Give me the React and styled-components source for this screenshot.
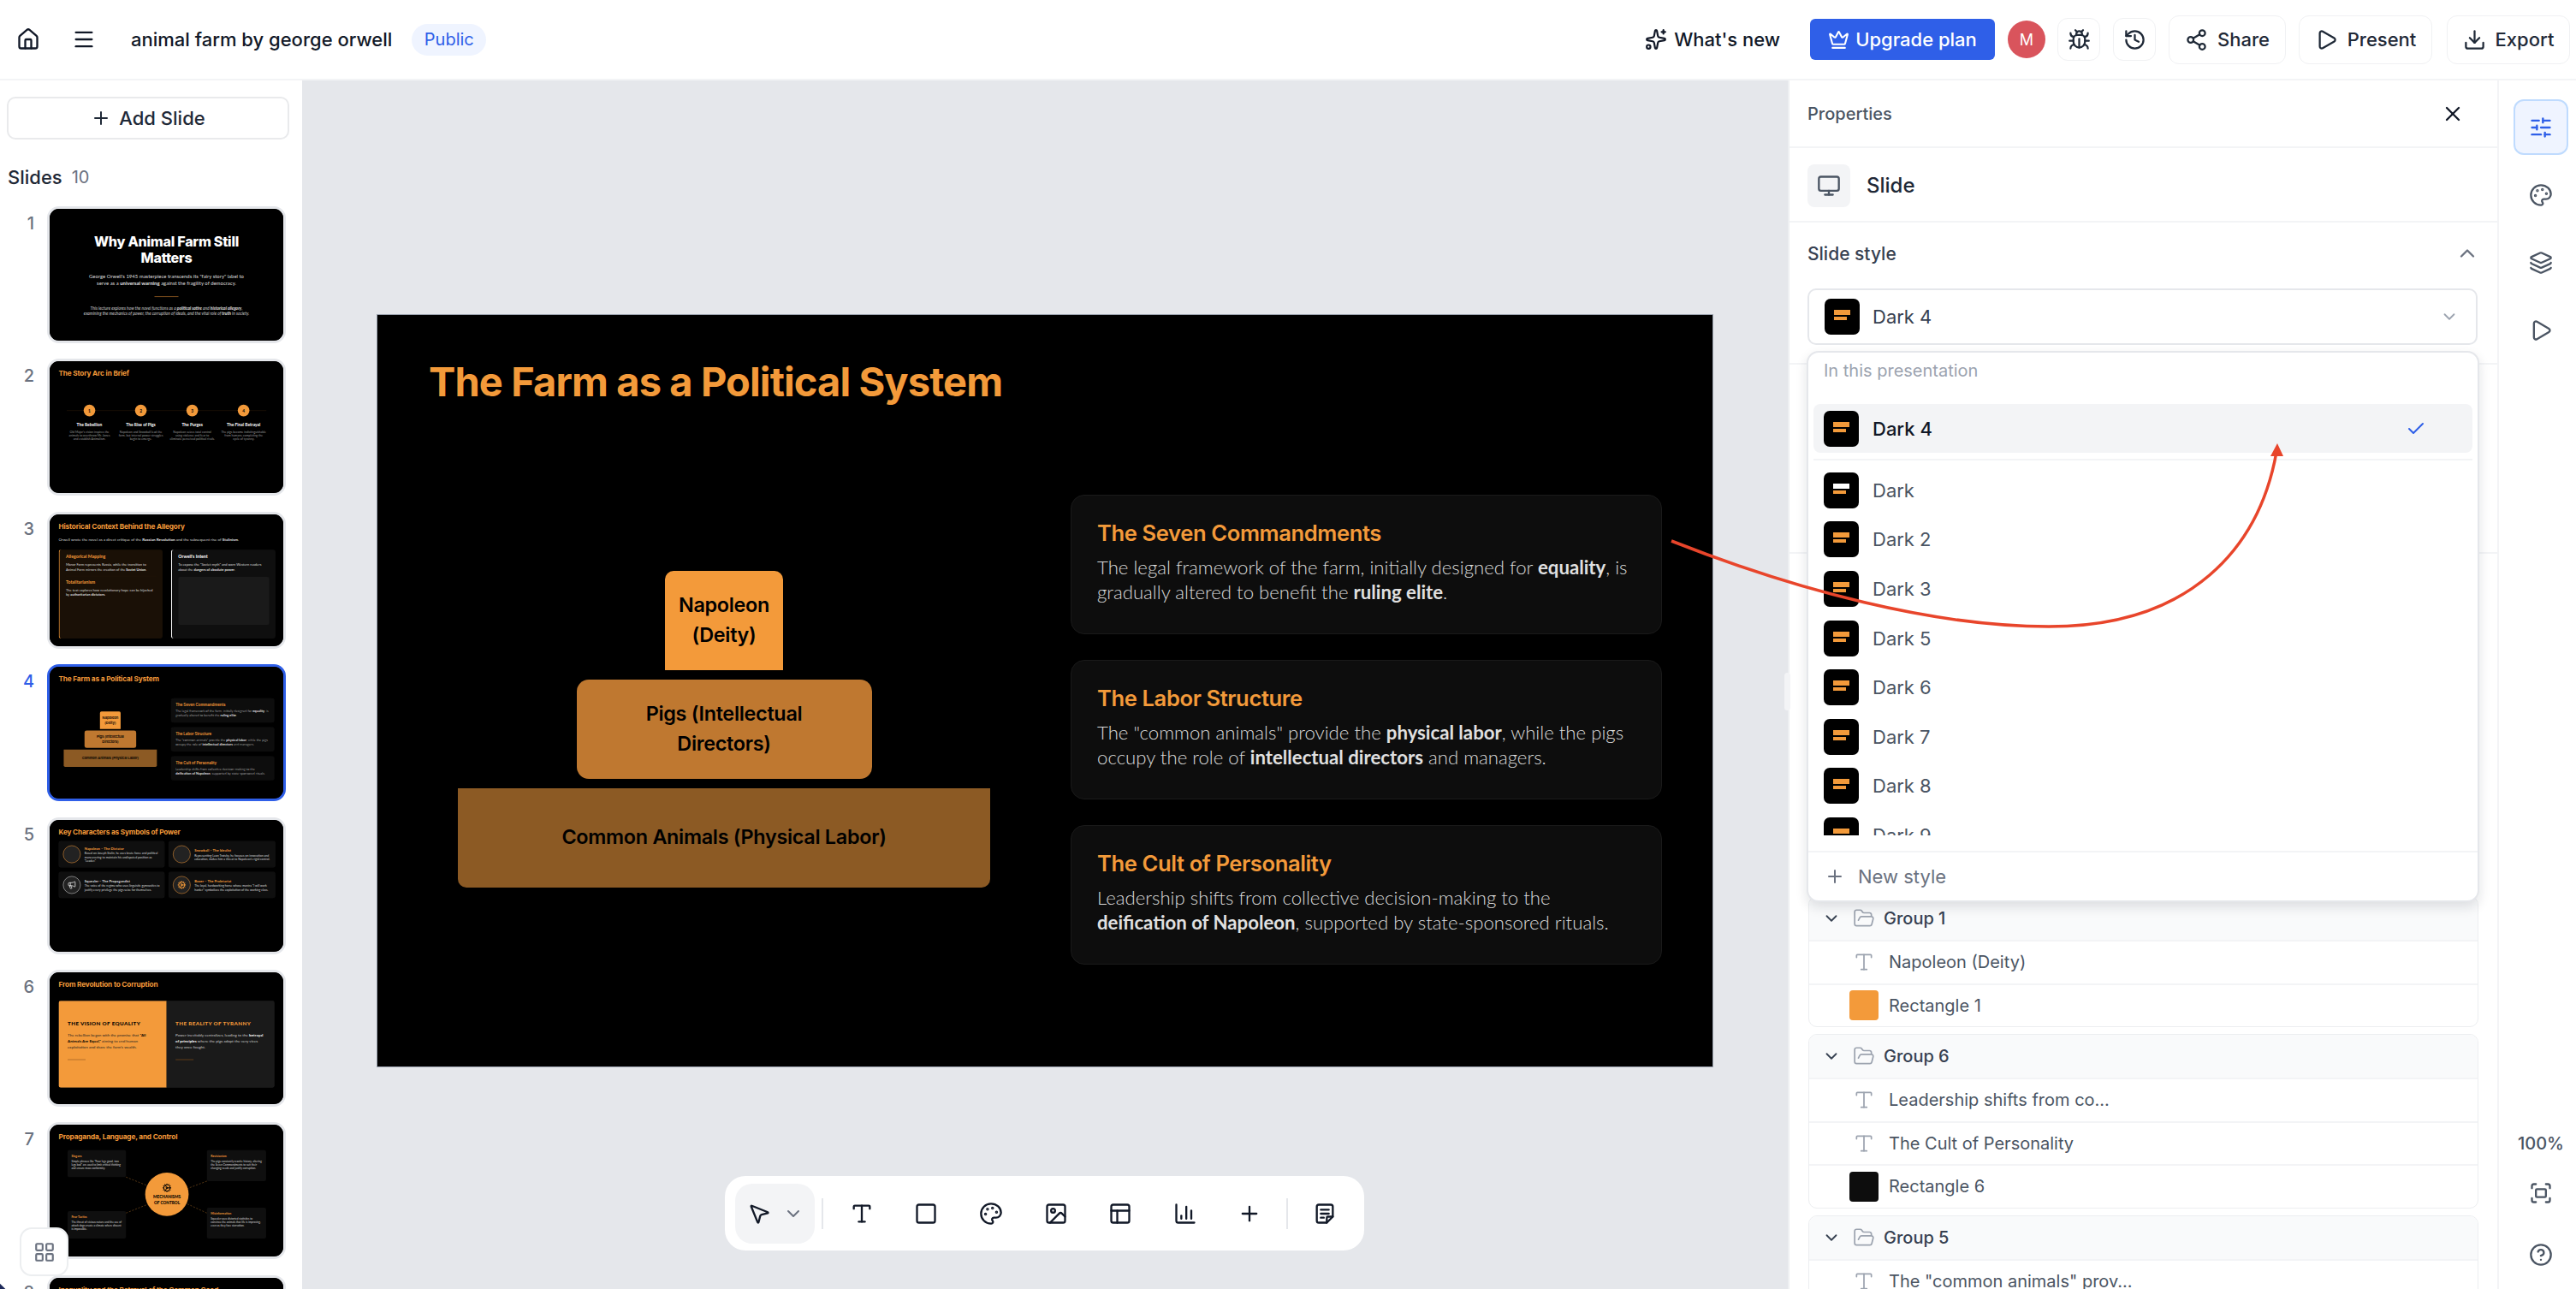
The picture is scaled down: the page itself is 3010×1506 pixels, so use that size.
import styled, { createGlobalStyle } from "styled-components"
import {
    House, Menu, Sparkles, Crown, Bug, History, Share2, Play, Download, X, Monitor, ChevronUp, ChevronDown,
    Check, Plus, SlidersHorizontal, Palette, Layers, Fullscreen, CircleHelp, MousePointer2, Type, Square,
    Image, PanelsTopLeft, ChartColumn, FolderOpen, LayoutGrid, Megaphone, Cog,
} from "lucide-react"

const ORANGE = "#f39a3a"
const BLUE = "#2f5fe8"
const SANS = `"Inter", "Liberation Sans", sans-serif`
const SLIDE_FONT = `"Lato", "Inter", sans-serif`

const GlobalStyle = createGlobalStyle`
    * { box-sizing: border-box; }
    html, body { margin: 0; padding: 0; background: #fff; }
    body { font-family: ${SANS}; width: 3010px; height: 1506px; overflow: hidden; }
`

const Page = styled.div`
    position: relative;
    width: 3010px;
    height: 1506px;
    display: flex;
    flex-direction: column;
    overflow: hidden;
`

const Header = styled.header`
    height: 94px;
    flex: none;
    display: flex;
    align-items: center;
    justify-content: space-between;
    padding: 0 7px 0 19px;
    border-bottom: 2px solid #f3f4f6;
    color: #111827;
`
const HeaderGroup = styled.div`
    display: flex;
    align-items: center;
`
const Title = styled.span`
    margin-left: 41px;
    font-size: 22px;
    font-weight: 500;
    color: #111827;
`
const Pill = styled.span`
    margin-left: 23px;
    width: 87px;
    height: 37px;
    border-radius: 19px;
    background: #eff4ff;
    color: ${BLUE};
    font-size: 20px;
    display: flex;
    align-items: center;
    justify-content: center;
`
const MenuButton = styled.span`
    margin-left: 37px;
    display: flex;
`
const WhatsNew = styled.span`
    display: flex;
    align-items: center;
    gap: 8px;
    font-size: 22px;
    font-weight: 500;
    margin-right: 35px;
`
const Upgrade = styled.span`
    width: 216px;
    height: 48px;
    background: ${BLUE};
    color: #fff;
    border-radius: 6px;
    display: flex;
    align-items: center;
    justify-content: center;
    gap: 7px;
    font-size: 22px;
    font-weight: 500;
`
const Avatar = styled.span`
    width: 44px;
    height: 44px;
    margin: 0 14px 0 15px;
    border-radius: 50%;
    background: #d9545c;
    color: #fff;
    font-size: 18px;
    display: flex;
    align-items: center;
    justify-content: center;
`
const HeadButton = styled.span`
    width: ${p => p.$w}px;
    height: ${p => p.$h}px;
    margin-right: ${p => p.$mr || 0}px;
    border: 1px solid #f0f1f3;
    border-radius: 12px;
    display: flex;
    align-items: center;
    justify-content: center;
    gap: 11px;
    font-size: 22px;
    font-weight: 500;
    color: #1f2937;
`

const Body = styled.div`
    flex: 1;
    min-height: 0;
    display: flex;
`

/* left column */
const Sidebar = styled.aside`
    width: 353px;
    flex: none;
    padding: 19px 8px 0;
    overflow: hidden;
    background: #fff;
`
const AddSlide = styled.div`
    width: 330px;
    height: 50px;
    border: 2px solid #e9eaec;
    border-radius: 10px;
    display: flex;
    align-items: center;
    justify-content: center;
    gap: 9px;
    font-size: 22px;
    font-weight: 500;
    color: #1f2937;
`
const SlidesLabel = styled.div`
    margin: 31px 0 21px 1px;
    height: 26px;
    display: flex;
    align-items: center;
    gap: 11px;
    font-size: 22px;
    font-weight: 500;
    color: #1f2937;
    span {
        font-size: 20px;
        font-weight: 400;
        color: #6b7280;
    }
`
const ThumbList = styled.div`
    display: flex;
    flex-direction: column;
    gap: 18.4px;
`
const ThumbRow = styled.div`
    display: flex;
`
const ThumbNumber = styled.div`
    width: 32px;
    margin-right: 15px;
    padding-top: 8px;
    text-align: right;
    font-size: 20px;
    line-height: 24px;
    font-weight: 500;
    color: ${p => (p.$active ? BLUE : "#6b7280")};
`
const ThumbFrame = styled.div`
    width: 279px;
    height: 160px;
    flex: none;
    border: 3px solid ${p => (p.$active ? BLUE : "#e5e7eb")};
    border-radius: 14px;
    overflow: hidden;
    background: #000;
    & > div {
        transform: scale(0.175);
        transform-origin: 0 0;
    }
`

/* slide content */
const SlideBase = styled.div`
    position: relative;
    width: 1560px;
    height: 878px;
    flex: none;
    background: #000;
    padding: 49px 59px 0 60px;
    font-family: ${SLIDE_FONT};
    color: #dadada;
    overflow: hidden;
    strong { font-weight: 700; color: #e0e0e0; }
`
const SlideTitle = styled.h1`
    margin: 0;
    font-family: ${SANS};
    font-size: 47px;
    line-height: 58px;
    font-weight: 700;
    color: ${ORANGE};
    letter-spacing: -0.9px;
`
const Columns = styled.div`
    margin-top: 103px;
    height: 548px;
    display: grid;
    grid-template-columns: 690px 691px;
    gap: 60px;
`
const Pyramid = styled.div`
    display: flex;
    flex-direction: column;
    align-items: center;
    justify-content: center;
    gap: 11px;
    margin-top: -2px;
`
const Tier = styled.div`
    width: ${p => p.$w}px;
    height: 116px;
    padding: 0 ${p => p.$pad}px 2px;
    background: ${p => p.$bg};
    border-radius: ${p => p.$radius};
    color: #000;
    font-family: ${SANS};
    font-size: 23.4px;
    line-height: 35px;
    font-weight: 600;
    letter-spacing: -0.3px;
    text-align: center;
    display: flex;
    align-items: center;
    justify-content: center;
`
const InfoCards = styled.div`
    display: flex;
    flex-direction: column;
    gap: 30px;
`
const InfoCard = styled.div`
    height: 163px;
    background: #0d0d0d;
    border: 1px solid #1a1a1a;
    border-radius: 16px;
    padding: 27px 30px 0;
    h3 {
        margin: 0 0 8px;
        font-family: ${SANS};
        font-size: 25.6px;
        line-height: 34px;
        font-weight: 600;
        letter-spacing: -0.4px;
        color: ${ORANGE};
    }
    p {
        margin: 0;
        font-size: 22.2px;
        line-height: 29px;
        font-weight: 300;
    }
`

/* slide 1 */
const CenterSlide = styled(SlideBase)`
    padding: 165px 220px 0;
    text-align: center;
    h1 {
        margin: 0 0 40px;
        font-family: ${SANS};
        font-size: 92px;
        line-height: 108px;
        font-weight: 800;
        color: #fff;
        letter-spacing: -1.5px;
    }
    p.lead {
        margin: 0 auto;
        width: 1120px;
        font-size: 34px;
        line-height: 51px;
        color: #ddd;
    }
    p.foot {
        margin: 0;
        font-size: 28px;
        line-height: 34px;
        font-style: italic;
        color: #ccc;
    }
`
const Rule = styled.div`
    width: ${p => p.$w || 160}px;
    height: 6px;
    margin: ${p => p.$m || "60px auto 57px"};
    background: ${p => p.$c || "#7a4c1c"};
`

/* slide 2 */
const Timeline = styled.div`
    position: relative;
    margin: 183px 54px 0;
    display: grid;
    grid-template-columns: repeat(4, 1fr);
    gap: 40px;
    &:before {
        content: "";
        position: absolute;
        top: 39px;
        left: 0;
        right: 0;
        height: 3px;
        background: #2a1a08;
    }
`
const TimeStep = styled.div`
    position: relative;
    text-align: center;
    b {
        display: flex;
        width: 78px;
        height: 78px;
        margin: 0 auto 38px;
        align-items: center;
        justify-content: center;
        border-radius: 50%;
        background: ${ORANGE};
        color: #000;
        font-size: 28px;
    }
    h4 {
        margin: 0 0 22px;
        font-size: 28px;
        color: #fff;
    }
    p {
        margin: 0;
        font-size: 20px;
        line-height: 23px;
        color: #999;
    }
`

/* slide 3 */
const ContextIntro = styled.p`
    margin: 43px 0 55px;
    font-size: 26px;
    line-height: 30px;
    color: #ccc;
`
const ContextGrid = styled.div`
    display: grid;
    grid-template-columns: 694px 697px;
    gap: 57px;
`
const ContextCard = styled.div`
    height: 593px;
    padding: 26px 42px;
    background: ${p => p.$bg};
    border-left: 6px solid ${p => p.$c};
    border-radius: 16px;
    h4 {
        margin: 0 0 22px;
        font-size: 30px;
        color: ${p => p.$c};
    }
    p {
        margin: 0;
        font-size: 23px;
        line-height: 32px;
    }
    hr {
        margin: 28px 0 18px;
        border: 0;
        height: 1px;
        background: #33240f;
    }
`
const MissingImage = styled.div`
    margin-top: 34px;
    height: 320px;
    border-radius: 12px;
    background: #1a1a1a;
`

/* slide 5 */
const CharGrid = styled.div`
    margin-top: 33px;
    display: grid;
    grid-template-columns: 708px 714px;
    gap: 28px 26px;
`
const CharCard = styled.div`
    height: 177px;
    padding: 0 28px;
    display: flex;
    align-items: center;
    gap: 26px;
    background: #0f0f0f;
    border: 1px solid #1c1c1c;
    border-radius: 16px;
    i {
        width: 118px;
        height: 118px;
        flex: none;
        display: flex;
        align-items: center;
        justify-content: center;
        border-radius: 50%;
        border: 3px solid ${p => p.$c};
        background: #222;
        color: ${p => p.$c};
    }
    h4 {
        margin: 0 0 8px;
        font-size: 24px;
        color: ${p => p.$c};
    }
    p {
        margin: 0;
        font-size: 20px;
        line-height: 24px;
    }
`

/* slide 6 */
const Split = styled.div`
    margin-top: 83px;
    height: 580px;
    display: grid;
    grid-template-columns: 1fr 1fr;
    border-radius: 14px;
    overflow: hidden;
    background: #1a1a1a;
`
const SplitSide = styled.div`
    padding: 130px 60px 0;
    background: ${p => (p.$fill ? ORANGE : "#1a1a1a")};
    color: ${p => (p.$fill ? "#222" : "#ccc")};
    h3 {
        margin: 0 0 36px;
        font-size: 36px;
        letter-spacing: 2px;
        font-weight: 900;
        color: ${p => (p.$fill ? "#000" : ORANGE)};
    }
    p {
        margin: 0 0 60px;
        font-size: 26px;
        line-height: 40px;
    }
    strong { color: ${p => (p.$fill ? "#000" : "#fff")}; }
`

/* slide 7 */
const ControlNode = styled.div`
    position: absolute;
    left: ${p => p.$x}px;
    top: ${p => p.$y}px;
    width: ${p => p.$w}px;
    height: ${p => p.$h}px;
    padding: 26px;
    background: #0f0f0f;
    border-radius: 12px;
    h4 {
        margin: 0 0 10px;
        font-size: 20px;
        color: ${ORANGE};
    }
    p {
        margin: 0;
        font-size: 18px;
        line-height: 24px;
    }
`
const ControlHub = styled.div`
    position: absolute;
    left: 638px;
    top: 320px;
    width: 290px;
    height: 290px;
    border-radius: 50%;
    background: ${ORANGE};
    color: #000;
    display: flex;
    flex-direction: column;
    align-items: center;
    justify-content: center;
    gap: 10px;
    font-size: 27px;
    line-height: 38px;
    font-weight: 900;
    text-align: center;
`
const HubLines = styled.svg`
    position: absolute;
    left: 0;
    top: 0;
`

/* centre canvas */
const Canvas = styled.main`
    position: relative;
    flex: 1;
    min-width: 0;
    background: #e5e7eb;
    display: flex;
    align-items: center;
    justify-content: center;
    padding-top: 14px;
`
const MainSlide = styled(SlideBase)`
    box-shadow: 0 0 0 1px #9ca3af;
`
const Toolbar = styled.div`
    position: absolute;
    left: 494px;
    bottom: 45px;
    width: 747px;
    height: 87px;
    padding: 0 12px;
    display: flex;
    align-items: center;
    background: #fff;
    border-radius: 24px;
`
const PointerGroup = styled.div`
    width: 93px;
    height: 70px;
    flex: none;
    padding-left: 14px;
    display: flex;
    align-items: center;
    gap: 14px;
    background: #f3f4f6;
    border-radius: 20px;
    color: #111827;
    svg + svg { color: #6b7280; }
`
const ToolDivider = styled.div`
    width: 2px;
    height: 36px;
    flex: none;
    margin: ${p => p.$m};
    background: #e5e7eb;
`
const Tool = styled.span`
    width: 75.6px;
    flex: none;
    display: flex;
    justify-content: center;
    color: #111827;
`

/* right panel */
const Panel = styled.section`
    position: relative;
    height: 100%;
    border-left: 2px solid #eef0f2;
    background: #fff;
    overflow: hidden;
`
const PanelSide = styled.div`
    position: relative;
    width: 829px;
    flex: none;
`
const ResizeHandle = styled.div`
    position: absolute;
    left: -4px;
    top: 692px;
    width: 7px;
    height: 44px;
    border-radius: 4px;
    background: #f3f4f6;
    z-index: 2;
`
const PanelHead = styled.div`
    height: 79px;
    padding: 0 38px 0 21px;
    display: flex;
    align-items: center;
    justify-content: space-between;
    border-bottom: 2px solid #f3f4f6;
    font-size: 20px;
    font-weight: 500;
    color: #4b5563;
    svg { color: #111827; }
`
const SlideHead = styled.div`
    height: 87px;
    padding: 2px 21px 0;
    display: flex;
    align-items: center;
    gap: 19px;
    border-bottom: 2px solid #f3f4f6;
    font-size: 24px;
    font-weight: 500;
    color: #1f2937;
`
const IconBox = styled.span`
    width: 50px;
    height: 50px;
    border-radius: 8px;
    background: #f3f4f6;
    color: #4b5563;
    display: flex;
    align-items: center;
    justify-content: center;
`
const StyleSection = styled.div`
    position: relative;
    height: 166px;
    padding: 0 21px;
    border-bottom: 2px solid #f3f4f6;
`
const SectionHead = styled.div`
    height: 72px;
    margin-bottom: 5px;
    padding-right: 0;
    display: flex;
    align-items: center;
    justify-content: space-between;
    font-size: 21px;
    font-weight: 500;
    color: #374151;
    svg { color: #6b7280; }
`
const Select = styled.div`
    width: 783px;
    height: 66px;
    padding: 0 20px 0 18px;
    display: flex;
    align-items: center;
    gap: 15px;
    border: 2px solid #e5e7eb;
    border-radius: 10px;
    font-size: 22px;
    color: #374151;
    span { flex: 1; }
    svg { color: #9ca3af; }
`
const Swatch = styled.div`
    width: 41px;
    height: 42px;
    flex: none;
    padding: 13px 0 0 11px;
    background: #000;
    border-radius: 7px;
    &:before, &:after {
        content: "";
        display: block;
        background: ${ORANGE};
    }
    &:before {
        width: 19px;
        height: 6px;
        margin-bottom: 2px;
        background: ${p => (p.$white ? "#fff" : ORANGE)};
    }
    &:after {
        width: 15px;
        height: 4px;
    }
`
const HiddenSection = styled.div`
    height: 221px;
    border-bottom: 2px solid #f3f4f6;
    margin-bottom: 400px;
`
const Group = styled.div`
    margin: 0 22px 8px 22px;
    border: 1px solid #eceef0;
    border-radius: 10px;
    overflow: hidden;
`
const GroupHead = styled.div`
    height: 50px;
    padding-left: 15px;
    display: flex;
    align-items: center;
    background: #f9fafb;
    font-size: 20px;
    font-weight: 500;
    color: #374151;
    svg:first-child { color: #374151; margin-right: 14px; }
    svg + svg { color: #9ca3af; margin-right: 10px; }
`
const LayerRow = styled.div`
    height: 50.5px;
    padding-left: 47px;
    display: flex;
    align-items: center;
    gap: 12px;
    border-top: 2px solid #f3f4f6;
    font-size: 20px;
    color: #4b5563;
    svg {
        width: 34px;
        flex: none;
        color: #9ca3af;
    }
`
const LayerSwatch = styled.span`
    width: 34px;
    height: 35px;
    flex: none;
    border-radius: 4px;
    background: ${p => p.$c};
`
const Dropdown = styled.div`
    position: absolute;
    left: 20px;
    top: 316px;
    width: 786px;
    height: 644px;
    z-index: 3;
    display: flex;
    flex-direction: column;
    background: #fff;
    border: 2px solid #e5e7eb;
    border-radius: 14px;
    box-shadow: 0 6px 14px rgba(17, 24, 39, 0.12);
`
const DropLabel = styled.div`
    height: 60px;
    padding: 9px 0 0 18px;
    font-size: 20px;
    color: #9ca3af;
`
const OptionList = styled.div`
    height: 504px;
    padding: 0 6px;
    overflow: hidden;
`
const Option = styled.div`
    height: ${p => (p.$selected ? 57 : 57.6)}px;
    padding: 0 12px;
    display: flex;
    align-items: center;
    gap: 16px;
    border-radius: 8px;
    background: ${p => (p.$selected ? "#f3f4f6" : "transparent")};
    font-size: 22px;
    font-weight: ${p => (p.$selected ? 500 : 400)};
    color: ${p => (p.$selected ? "#111827" : "#4b5563")};
    span { flex: 1; }
    svg {
        margin-right: 42px;
        color: ${BLUE};
    }
`
const OptionDivider = styled.div`
    height: 2px;
    margin: 7px 0 6px;
    background: #f3f4f6;
`
const NewStyle = styled.div`
    flex: 1;
    margin-top: 18px;
    padding-left: 19px;
    display: flex;
    align-items: center;
    gap: 15px;
    border-top: 2px solid #f3f4f6;
    font-size: 22px;
    color: #6b7280;
`

/* rail */
const Rail = styled.nav`
    width: 92px;
    flex: none;
    padding-top: 22px;
    display: flex;
    flex-direction: column;
    align-items: center;
    border-left: 2px solid #f3f4f6;
    color: #4b5563;
    background: #fff;
`
const RailButton = styled.span`
    width: 64px;
    height: 65px;
    margin-left: 8px;
    margin-bottom: ${p => p.$mb || 14}px;
    display: flex;
    align-items: center;
    justify-content: center;
    border-radius: 12px;
    border: 2px solid ${p => (p.$active ? "#bfdbfe" : "transparent")};
    background: ${p => (p.$active ? "#eff4ff" : "transparent")};
    color: ${p => (p.$active ? BLUE : "inherit")};
`
const Zoom = styled.div`
    margin-top: auto;
    margin-bottom: 32px;
    margin-left: 8px;
    font-size: 20px;
    font-weight: 500;
`
const RailIcon = styled.span`
    margin-left: 8px;
    margin-bottom: ${p => p.$mb}px;
    display: flex;
`

const GridButton = styled.div`
    position: absolute;
    left: 23px;
    top: 1434px;
    width: 57px;
    height: 57px;
    display: flex;
    align-items: center;
    justify-content: center;
    background: #fff;
    border: 2px solid #eceef0;
    border-radius: 14px;
    color: #6b7280;
`
const CornerBadge = styled.div`
    position: absolute;
    left: -12px;
    top: 1499px;
    width: 16px;
    height: 16px;
    transform: rotate(45deg);
    background: #1e2a5a;
`
const Annotation = styled.svg`
    position: absolute;
    left: 0;
    top: 0;
    z-index: 5;
    pointer-events: none;
`

function NotesIcon() {
    return (
        <svg width="28" height="28" viewBox="0 0 24 24" fill="none" stroke="currentColor" strokeWidth="2" strokeLinecap="round" strokeLinejoin="round">
            <path d="M6 3h12a2 2 0 0 1 2 2v10l-6 6H6a2 2 0 0 1-2-2V5a2 2 0 0 1 2-2z" />
            <path d="M14 21v-5a1 1 0 0 1 1-1h5" />
            <path d="M8 8h8M8 12h8M8 16h3" />
        </svg>
    )
}

function FarmSlide() {
    return (
        <>
            <SlideTitle>The Farm as a Political System</SlideTitle>
            <Columns>
                <Pyramid>
                    <Tier $w={138} $pad={10} $bg={ORANGE} $radius="10px 10px 0 0">Napoleon (Deity)</Tier>
                    <Tier $w={345} $pad={60} $bg="#bf7830" $radius="14px">Pigs (Intellectual Directors)</Tier>
                    <Tier $w={622} $pad={60} $bg="#8c5a24" $radius="0 0 10px 10px">Common Animals (Physical Labor)</Tier>
                </Pyramid>
                <InfoCards>
                    <InfoCard>
                        <h3>The Seven Commandments</h3>
                        <p>The legal framework of the farm, initially designed for <strong>equality</strong>, is gradually altered to benefit the <strong>ruling elite</strong>.</p>
                    </InfoCard>
                    <InfoCard>
                        <h3>The Labor Structure</h3>
                        <p>The "common animals" provide the <strong>physical labor</strong>, while the pigs occupy the role of <strong>intellectual directors</strong> and managers.</p>
                    </InfoCard>
                    <InfoCard>
                        <h3>The Cult of Personality</h3>
                        <p>Leadership shifts from collective decision-making to the <strong>deification of Napoleon</strong>, supported by state-sponsored rituals.</p>
                    </InfoCard>
                </InfoCards>
            </Columns>
        </>
    )
}

const steps = [
    ["The Rebellion", "Old Major's vision inspires the animals to overthrow Mr. Jones and establish Animalism."],
    ["The Rise of Pigs", "Napoleon and Snowball lead the farm, but internal power struggles begin to emerge."],
    ["The Purges", "Napoleon seizes total control using violence and fear to eliminate perceived political rivals."],
    ["The Final Betrayal", "The pigs become indistinguishable from humans, completing the cycle of tyranny."],
]

const characters = [
    ["Napoleon – The Dictator", ORANGE, "Based on Joseph Stalin, he uses brute force and political maneuvering to maintain his undisputed position as \"Leader.\""],
    ["Snowball – The Idealist", ORANGE, "Representing Leon Trotsky, he focuses on innovation and education, makes him a threat to Napoleon's rigid control."],
    ["Squealer – The Propagandist", "#dddddd", "The voice of the regime who uses linguistic gymnastics to justify every privilege the pigs seize for themselves.", <Megaphone size={60} key="m" />],
    ["Boxer – The Proletariat", ORANGE, "The loyal, hardworking horse whose mantra \"I will work harder\" symbolizes the exploitation of the working class.", <Cog size={60} key="c" />],
]

const nodes = [
    { x: 120, y: 170, w: 390, h: 180, t: "Slogans", d: "Simple phrases like \"Four legs good, two legs bad\" are used to limit critical thinking and ensure mass conformity." },
    { x: 1050, y: 170, w: 395, h: 207, t: "Revisionism", d: "The pigs constantly rewrite history, altering the Seven Commandments to suit their changing needs and justify corruption." },
    { x: 120, y: 577, w: 390, h: 183, t: "Fear Tactics", d: "The threat of vicious nature and the use of attack dogs create a climate where dissent is impossible." },
    { x: 1050, y: 554, w: 395, h: 206, t: "Misinformation", d: "Squealer uses distorted statistics to convince the animals that life is improving, even as they face starvation." },
]

const slides = [
    <CenterSlide key="1">
        <h1>Why Animal Farm Still Matters</h1>
        <p className="lead">George Orwell's 1945 masterpiece transcends its "fairy story" label to serve as a <strong>universal warning</strong> against the fragility of democracy.</p>
        <Rule />
        <p className="foot">This lecture explores how the novel functions as a <strong>political satire</strong> and <strong>historical allegory</strong>, examining the mechanics of power, the corruption of ideals, and the vital role of <strong>truth</strong> in society.</p>
    </CenterSlide>,
    <SlideBase key="2">
        <SlideTitle>The Story Arc in Brief</SlideTitle>
        <Timeline>
            {steps.map((s, i) => (
                <TimeStep key={s[0]}>
                    <b>{i + 1}</b>
                    <h4>{s[0]}</h4>
                    <p>{s[1]}</p>
                </TimeStep>
            ))}
        </Timeline>
    </SlideBase>,
    <SlideBase key="3">
        <SlideTitle>Historical Context Behind the Allegory</SlideTitle>
        <ContextIntro>Orwell wrote the novel as a direct critique of the <strong>Russian Revolution</strong> and the subsequent rise of <strong>Stalinism</strong>.</ContextIntro>
        <ContextGrid>
            <ContextCard $bg="#1a1006" $c={ORANGE}>
                <h4>Allegorical Mapping</h4>
                <p>Manor Farm represents Russia, while the transition to Animal Farm mirrors the creation of the <strong>Soviet Union</strong>.</p>
                <hr />
                <h4>Totalitarianism</h4>
                <p>The text explores how revolutionary hope can be hijacked by <strong>authoritarian dictators</strong>.</p>
            </ContextCard>
            <ContextCard $bg="#0f0f0f" $c="#ffffff">
                <h4>Orwell's Intent</h4>
                <p>To expose the "Soviet myth" and warn Western readers about the <strong>dangers of absolute power</strong>.</p>
                <MissingImage />
            </ContextCard>
        </ContextGrid>
    </SlideBase>,
    <SlideBase key="4">
        <FarmSlide />
    </SlideBase>,
    <SlideBase key="5">
        <SlideTitle>Key Characters as Symbols of Power</SlideTitle>
        <CharGrid>
            {characters.map(c => (
                <CharCard key={c[0]} $c={c[1]}>
                    <i>{c[3]}</i>
                    <div>
                        <h4>{c[0]}</h4>
                        <p>{c[2]}</p>
                    </div>
                </CharCard>
            ))}
        </CharGrid>
    </SlideBase>,
    <SlideBase key="6">
        <SlideTitle>From Revolution to Corruption</SlideTitle>
        <Split>
            <SplitSide $fill>
                <h3>THE VISION OF EQUALITY</h3>
                <p>The rebellion began with the promise that <strong>"All Animals Are Equal,"</strong> aiming to end human exploitation and share the farm's wealth.</p>
                <Rule $w={120} $m="0" $c="#b9722a" />
            </SplitSide>
            <SplitSide>
                <h3>THE REALITY OF TYRANNY</h3>
                <p>Power inevitably centralizes, leading to the <strong>betrayal of principles</strong> where the pigs adopt the very vices they once fought.</p>
                <Rule $w={120} $m="0" $c="#5c3a16" />
            </SplitSide>
        </Split>
    </SlideBase>,
    <SlideBase key="7">
        <SlideTitle>Propaganda, Language, and Control</SlideTitle>
        <HubLines width="1560" height="878">
            <path d="M510 350 L660 410 M1050 377 L910 430 M510 590 L660 530 M1050 590 L910 525" stroke="#5c3a16" strokeWidth="5" strokeDasharray="12 10" fill="none" />
        </HubLines>
        {nodes.map(n => (
            <ControlNode key={n.t} $x={n.x} $y={n.y} $w={n.w} $h={n.h}>
                <h4>{n.t}</h4>
                <p>{n.d}</p>
            </ControlNode>
        ))}
        <ControlHub>
            <Cog size={64} />
            <div>MECHANISMS<br />OF CONTROL</div>
        </ControlHub>
    </SlideBase>,
    <SlideBase key="8">
        <SlideTitle>Inequality and the Betrayal of the Common Good</SlideTitle>
    </SlideBase>,
]

const darkStyles = ["Dark", "Dark 2", "Dark 3", "Dark 5", "Dark 6", "Dark 7", "Dark 8", "Dark 9"]

const groups = [
    { name: "Group 1", rows: [["Napoleon (Deity)"], ["Rectangle 1", ORANGE]] },
    { name: "Group 6", rows: [["Leadership shifts from co..."], ["The Cult of Personality"], ["Rectangle 6", "#0d0d0d"]] },
    { name: "Group 5", rows: [["The \"common animals\" prov..."]] },
]

export default function App() {
    return (
        <Page>
            <GlobalStyle />
            <Header>
                <HeaderGroup>
                    <House size={28} strokeWidth={2} />
                    <MenuButton><Menu size={28} strokeWidth={2} /></MenuButton>
                    <Title>animal farm by george orwell</Title>
                    <Pill>Public</Pill>
                </HeaderGroup>
                <HeaderGroup>
                    <WhatsNew><Sparkles size={26} />What's new</WhatsNew>
                    <Upgrade><Crown size={25} />Upgrade plan</Upgrade>
                    <Avatar>M</Avatar>
                    <HeadButton $w={50} $h={50} $mr={15}><Bug size={27} /></HeadButton>
                    <HeadButton $w={50} $h={50} $mr={15}><History size={27} /></HeadButton>
                    <HeadButton $w={137} $h={57} $mr={15}><Share2 size={27} />Share</HeadButton>
                    <HeadButton $w={156} $h={57} $mr={17}><Play size={27} />Present</HeadButton>
                    <HeadButton $w={144} $h={57}><Download size={27} />Export</HeadButton>
                </HeaderGroup>
            </Header>
            <Body>
                <Sidebar>
                    <AddSlide><Plus size={24} />Add Slide</AddSlide>
                    <SlidesLabel>Slides <span>10</span></SlidesLabel>
                    <ThumbList>
                        {slides.map((s, i) => (
                            <ThumbRow key={i}>
                                <ThumbNumber $active={i === 3}>{i + 1}</ThumbNumber>
                                <ThumbFrame $active={i === 3}>{s}</ThumbFrame>
                            </ThumbRow>
                        ))}
                    </ThumbList>
                </Sidebar>
                <Canvas>
                    <MainSlide>
                        <FarmSlide />
                    </MainSlide>
                    <Toolbar>
                        <PointerGroup>
                            <MousePointer2 size={28} />
                            <ChevronDown size={24} />
                        </PointerGroup>
                        <ToolDivider $m="0 7px 0 8px" />
                        <Tool><Type size={28} /></Tool>
                        <Tool><Square size={28} /></Tool>
                        <Tool><Palette size={28} /></Tool>
                        <Tool><Image size={28} /></Tool>
                        <Tool><PanelsTopLeft size={28} /></Tool>
                        <Tool><ChartColumn size={28} /></Tool>
                        <Tool><Plus size={28} /></Tool>
                        <ToolDivider $m="0 5px 0 5px" />
                        <Tool><NotesIcon /></Tool>
                    </Toolbar>
                </Canvas>
                <PanelSide>
                    <ResizeHandle />
                    <Panel>
                        <PanelHead>Properties<X size={28} /></PanelHead>
                        <SlideHead><IconBox><Monitor size={28} /></IconBox>Slide</SlideHead>
                        <StyleSection>
                            <SectionHead>Slide style<ChevronUp size={28} /></SectionHead>
                            <Select>
                                <Swatch />
                                <span>Dark 4</span>
                                <ChevronDown size={22} />
                            </Select>
                        </StyleSection>
                        <HiddenSection />
                        {groups.map(g => (
                            <Group key={g.name}>
                                <GroupHead>
                                    <ChevronDown size={22} />
                                    <FolderOpen size={26} strokeWidth={1.6} />
                                    {g.name}
                                </GroupHead>
                                {g.rows.map(r => (
                                    <LayerRow key={r[0]}>
                                        {r[1] ? <LayerSwatch $c={r[1]} /> : <Type size={26} strokeWidth={1.6} />}
                                        {r[0]}
                                    </LayerRow>
                                ))}
                            </Group>
                        ))}
                        <Dropdown>
                            <DropLabel>In this presentation</DropLabel>
                            <OptionList>
                                <Option $selected>
                                    <Swatch />
                                    <span>Dark 4</span>
                                    <Check size={24} />
                                </Option>
                                <OptionDivider />
                                {darkStyles.map((d, i) => (
                                    <Option key={d}>
                                        <Swatch $white={i === 0} />
                                        <span>{d}</span>
                                    </Option>
                                ))}
                            </OptionList>
                            <NewStyle><Plus size={24} />New style</NewStyle>
                        </Dropdown>
                    </Panel>
                </PanelSide>
                <Rail>
                    <RailButton $active><SlidersHorizontal size={28} /></RailButton>
                    <RailButton><Palette size={28} /></RailButton>
                    <RailButton><Layers size={28} /></RailButton>
                    <RailButton><Play size={28} /></RailButton>
                    <Zoom>100%</Zoom>
                    <RailIcon $mb={44}><Fullscreen size={28} /></RailIcon>
                    <RailIcon $mb={26}><CircleHelp size={28} /></RailIcon>
                </Rail>
            </Body>
            <GridButton><LayoutGrid size={26} /></GridButton>
            <CornerBadge />
            <Annotation width="3010" height="1506">
                <path d="M1953 632 C2100 690 2260 732 2394 732 C2560 732 2640 640 2660 528" fill="none" stroke="#e8452b" strokeWidth="3.5" />
                <polygon points="2661,518 2653,533 2668,533" fill="#e8452b" />
            </Annotation>
        </Page>
    )
}
